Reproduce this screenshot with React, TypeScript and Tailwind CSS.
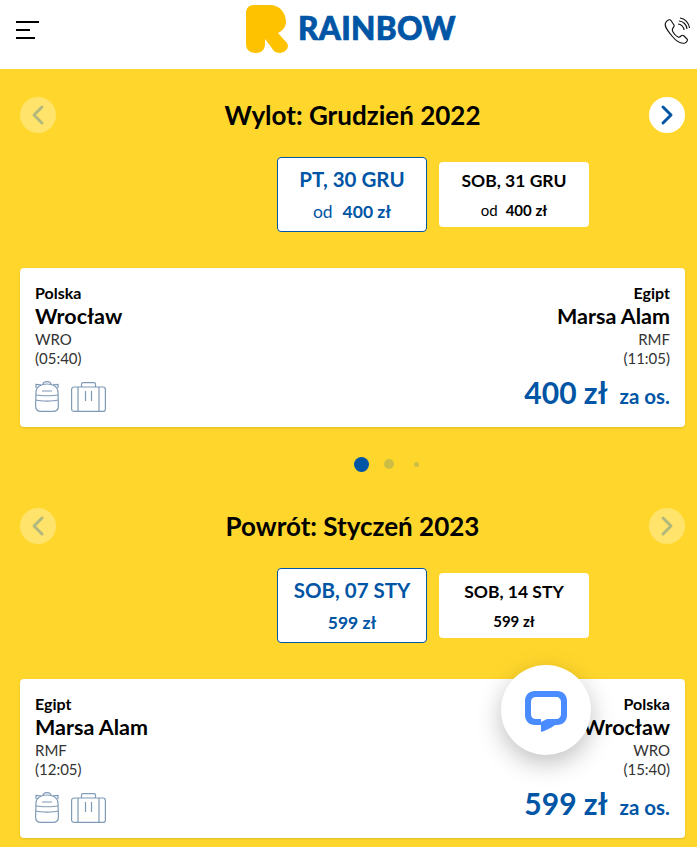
import { ChevronLeft, ChevronRight } from 'lucide-react';

const font = "font-['Lato',sans-serif]";

function Backpack() {
  return (
    <svg width="24" height="31" viewBox="0 0 24 31" fill="none" stroke="#7f9ab6" strokeWidth="1.2">
      <path d="M8 3.500 C8 1.500 10 0.600 12 0.600 C14 0.600 16 1.500 16 3.500" />
      <path d="M1 11 C1 6 6 3 12 3 C18 3 23 6 23 11 L23.400 25 C23.400 28.500 21.500 30.400 18 30.400 L6 30.400 C2.500 30.400 0.600 28.500 0.600 25 Z" />
      <path d="M1 7 L1 3.500 L6 3.800 M23 7 L23 3.500 L18 3.800" />
      <path d="M7 10 L17 10 M1 14 C6 15 18 15 23 14 M1 19 C6 20.500 18 20.500 23 19" />
    </svg>
  );
}

function Suitcase() {
  return (
    <svg width="35" height="30" viewBox="0 0 35 30" fill="none" stroke="#7f9ab6" strokeWidth="1.2">
      <path d="M10.500 5 L10.500 2 C10.500 1 11 0.600 12 0.600 L23 0.600 C24 0.600 24.500 1 24.500 2 L24.500 5" />
      <rect x="0.600" y="5" width="33.800" height="24.400" rx="2.500" />
      <path d="M7 5 L7 29.400 M28 5 L28 29.400 M14.500 9 L14.500 19 M20.500 9 L20.500 19" />
    </svg>
  );
}

function DateBox({ day, od, price, active }: { day: string; od?: boolean; price: string; active?: boolean }) {
  const color = active ? 'text-[#0055a5]' : 'text-black';
  return (
    <div
      className={
        active
          ? 'w-[150px] h-[75px] bg-white rounded border border-[#0055a5] flex flex-col items-center justify-center gap-[7px]'
          : 'w-[150px] h-[65px] bg-white rounded flex flex-col items-center justify-center gap-[4px]'
      }
    >
      <div className={`${active ? 'text-[20.500px]' : 'text-[17.500px]'} leading-6 font-bold ${color}`}>{day}</div>
      <div
        className={`flex items-baseline ${active ? 'gap-[10px] text-[17.500px] translate-y-[2px]' : 'gap-2 text-[15px] translate-y-[1px]'} leading-6 ${color}`}
      >
        {od && <span>od</span>}
        <span className="font-bold">{price}</span>
      </div>
    </div>
  );
}

function Place({
  country,
  city,
  code,
  time,
  right,
}: {
  country: string;
  city: string;
  code: string;
  time: string;
  right?: boolean;
}) {
  return (
    <div className={right ? 'text-right' : ''}>
      <div className="text-[16px] leading-[18px] font-bold text-black">{country}</div>
      <div className="text-[21.500px] leading-[28px] font-bold text-black">{city}</div>
      <div className="text-[15px] leading-[19px] text-[#333]">{code}</div>
      <div className="text-[15px] leading-[19px] text-[#333]">{time}</div>
    </div>
  );
}

function Section({
  title,
  nextActive,
  days,
  od,
  from,
  to,
  total,
}: {
  title: string;
  nextActive?: boolean;
  days: { day: string; price: string }[];
  od?: boolean;
  from: string[];
  to: string[];
  total: string;
}) {
  return (
    <div>
      <div className="flex items-center justify-between h-9">
        <button className="w-9 h-9 rounded-full bg-white/30 flex items-center justify-center">
          <ChevronLeft className="w-8 h-8 text-[#0055a5]/30" strokeWidth={2.2} />
        </button>
        <h2 className="text-[26px] font-bold text-black">{title}</h2>
        <button
          className={
            nextActive
              ? 'w-9 h-9 rounded-full bg-white flex items-center justify-center'
              : 'w-9 h-9 rounded-full bg-white/30 flex items-center justify-center'
          }
        >
          <ChevronRight
            className={nextActive ? 'w-8 h-8 text-[#0055a5]' : 'w-8 h-8 text-[#0055a5]/30'}
            strokeWidth={2.2}
          />
        </button>
      </div>

      <div className="flex items-center gap-3 mt-6 ml-[257px]">
        <DateBox day={days[0].day} od={od} price={days[0].price} active />
        <DateBox day={days[1].day} od={od} price={days[1].price} />
      </div>

      <div className="mt-9 h-[159px] bg-white rounded px-[15px] pt-[16px] flex justify-between shadow-sm">
        <div>
          <Place country={from[0]} city={from[1]} code={from[2]} time={from[3]} />
          <div className="flex items-end gap-3 mt-[13px]">
            <Backpack />
            <Suitcase />
          </div>
        </div>
        <div className="flex flex-col items-end">
          <Place country={to[0]} city={to[1]} code={to[2]} time={to[3]} right />
          <div className="flex items-baseline gap-3 mt-[6px] text-[#0055a5] font-bold">
            <span className="text-[30px] leading-9">{total}</span>
            <span className="text-[20.500px]">za os.</span>
          </div>
        </div>
      </div>
    </div>
  );
}

export default function App() {
  return (
    <div className={`relative w-[697px] h-[847px] overflow-hidden bg-[#ffd72c] ${font}`}>
      <header className="h-[69px] bg-white flex items-center justify-between pl-4 pr-[7px]">
        <div className="flex flex-col gap-[6px] w-[23px] -mt-[10px]">
          <span className="h-[2px] w-[23px] bg-black" />
          <span className="h-[2px] w-[14px] bg-black" />
          <span className="h-[2px] w-[19px] bg-black" />
        </div>
        <div className="flex items-center gap-[10px] -mt-[11px] -ml-[1px]">
          <svg width="42" height="48" viewBox="0 0 42 48">
            <path
              d="M0 8 C0 3 3 0 8 0 L24 0 C34 0 40 8 40 17 C40 22 36 26 32 28 L41 38 C44 43 39 48 34 48 C29 48 27 45 25 42 L19 34 L19 39 C19 45 15 48 10 48 C4 48 0 45 0 39 Z"
              fill="#ffc200"
            />
          </svg>
          <span className="text-[31.500px] leading-none font-black tracking-[0.3px] text-[#0055a5] [-webkit-text-stroke:0.7px_#0055a5]">
            RAINBOW
          </span>
        </div>
        <svg
          width="26"
          height="28"
          viewBox="0 0 26 28"
          fill="none"
          stroke="#111"
          strokeWidth="1.1"
          className="-mt-[10px]"
        >
          <path d="M1.500 7 C3 4 6 3 7 4.500 L10 9 C10.500 10 10 11 9 12 C8 13 8 14 9 16 C10 18 12 20 14 21 C15 21.500 16 21 17 20 C18 19 19 19 20 20 L23 23 C24 24 23 26 21 27 C17 28 12 25 8 20 C4 15 0 11 1.500 7 Z" />
          <path d="M14 8 C17 8 20 11 20 14 M15 5 C19 5 23 9 23 13 M16 2 C21 2.500 25 7 25.500 12" />
        </svg>
      </header>

      <main className="pl-5 pr-3 pt-[28px]">
        <Section
          title="Wylot: Grudzień 2022"
          nextActive
          od
          days={[
            { day: 'PT, 30 GRU', price: '400 zł' },
            { day: 'SOB, 31 GRU', price: '400 zł' },
          ]}
          from={['Polska', 'Wrocław', 'WRO', '(05:40)']}
          to={['Egipt', 'Marsa Alam', 'RMF', '(11:05)']}
          total="400 zł"
        />

        <div className="flex items-center gap-[15px] h-[74px] pl-[334px]">
          <span className="w-[15px] h-[15px] rounded-full bg-[#0055a5]" />
          <span className="w-[10px] h-[10px] rounded-full bg-[#0055a5]/20" />
          <span className="w-[5px] h-[5px] ml-[5px] rounded-full bg-[#0055a5]/20" />
        </div>

        <div className="mt-[7px]">
          <Section
            title="Powrót: Styczeń 2023"
            days={[
              { day: 'SOB, 07 STY', price: '599 zł' },
              { day: 'SOB, 14 STY', price: '599 zł' },
            ]}
            from={['Egipt', 'Marsa Alam', 'RMF', '(12:05)']}
            to={['Polska', 'Wrocław', 'WRO', '(15:40)']}
            total="599 zł"
          />
        </div>
      </main>

      <div className="absolute left-[501px] top-[665px] w-[90px] h-[90px] rounded-full bg-white shadow-[0_8px_24px_rgba(0,0,0,0.25)] flex items-center justify-center">
        <svg width="42" height="42" viewBox="0 0 42 42" className="mt-[3px]">
          <path
            fillRule="evenodd"
            d="M10 0 L32 0 C38 0 42 4 42 10 L42 24 C42 30 38 34 32 34 L30 34 C26 37 21 39.500 16 41 L16 34 L10 34 C4 34 0 30 0 24 L0 10 C0 4 4 0 10 0 Z M11 6 C8 6 6 8 6 11 L6 23 C6 26 8 28 11 28 L16 28 L16 31 L22 28 L31 28 C34 28 36 26 36 23 L36 11 C36 8 34 6 31 6 Z"
            fill="#4a8cff"
          />
        </svg>
      </div>
    </div>
  );
}
